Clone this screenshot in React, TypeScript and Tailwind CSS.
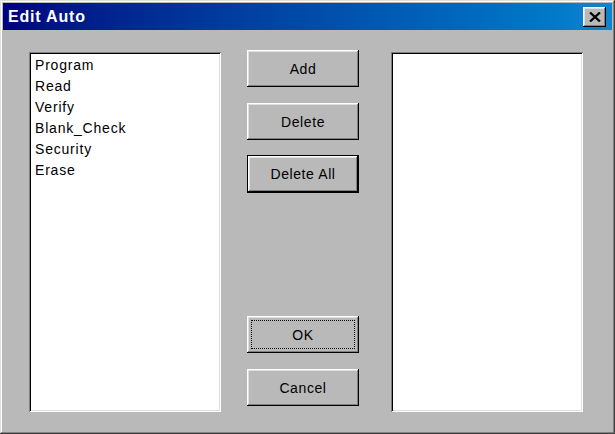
import React from "react";

const raised =
  "shadow-[inset_-1px_-1px_#000,inset_1px_1px_#fff,inset_-2px_-2px_#808080,inset_2px_2px_#dfdfdf]";

function Btn({ label, h = 37, extra = "", children }: { label: string; h?: number; extra?: string; children?: React.ReactNode }) {
  return (
    <div
      className={`relative w-[112px] bg-[#b9b9b9] flex items-center justify-center text-[14px] tracking-[0.6px] text-black ${raised} ${extra}`}
      style={{ height: h }}
    >
      {children}
      <span className="leading-none">{label}</span>
    </div>
  );
}

export default function App() {
  const items = ["Program", "Read", "Verify", "Blank_Check", "Security", "Erase"];
  return (
    <div
      className="w-[615px] h-[434px] bg-[#b9b9b9] p-[3px] flex flex-col shadow-[inset_-1px_-1px_#404040,inset_1px_1px_#dfdfdf,inset_-2px_-2px_#808080,inset_2px_2px_#fff]"
      style={{ fontFamily: '"Liberation Sans", Arial, sans-serif' }}
    >
      <div className="h-[27px] flex items-center bg-gradient-to-r from-[#000080] to-[#1084d0] pl-[5px] pr-[6px]">
        <span className="text-white font-bold text-[16px] tracking-[0.8px] leading-none">Edit Auto</span>
        <div className={`ml-auto w-[23px] h-[20px] bg-[#b9b9b9] flex items-center justify-center ${raised}`}>
          <svg width="12" height="10" viewBox="0 0 12 10">
            <path d="M1 0.5 L11 9.5 M11 0.5 L1 9.5" stroke="#000" strokeWidth="2.3" />
          </svg>
        </div>
      </div>
      <div className="flex flex-row items-start pt-[20px] pl-[26px]">
        <div className="mt-[2px] w-[192px] h-[360px] bg-white p-[2px] shadow-[inset_1px_1px_#808080,inset_-1px_-1px_#fff,inset_2px_2px_#000,inset_-2px_-2px_#dfdfdf]">
          <div className="pl-[4px] pt-[1px]">
            {items.map((t) => (
              <div key={t} className="h-[21px] leading-[21px] text-[14px] tracking-[0.8px] text-black">
                {t}
              </div>
            ))}
          </div>
        </div>
        <div className="ml-[26px] flex flex-col">
          <Btn label="Add" />
          <div className="mt-[16px]">
            <Btn label="Delete" />
          </div>
          <div className="mt-[15px]">
            <Btn label="Delete All" h={38} extra="border border-black" />
          </div>
          <div className="mt-[123px]">
            <Btn label="OK">
              <span className="absolute inset-[4px] border border-dotted border-black" />
            </Btn>
          </div>
          <div className="mt-[16px]">
            <Btn label="Cancel" />
          </div>
        </div>
        <div className="ml-[32px] mt-[2px] w-[192px] h-[360px] bg-white shadow-[inset_1px_1px_#808080,inset_-1px_-1px_#fff,inset_2px_2px_#000,inset_-2px_-2px_#dfdfdf]" />
      </div>
    </div>
  );
}
